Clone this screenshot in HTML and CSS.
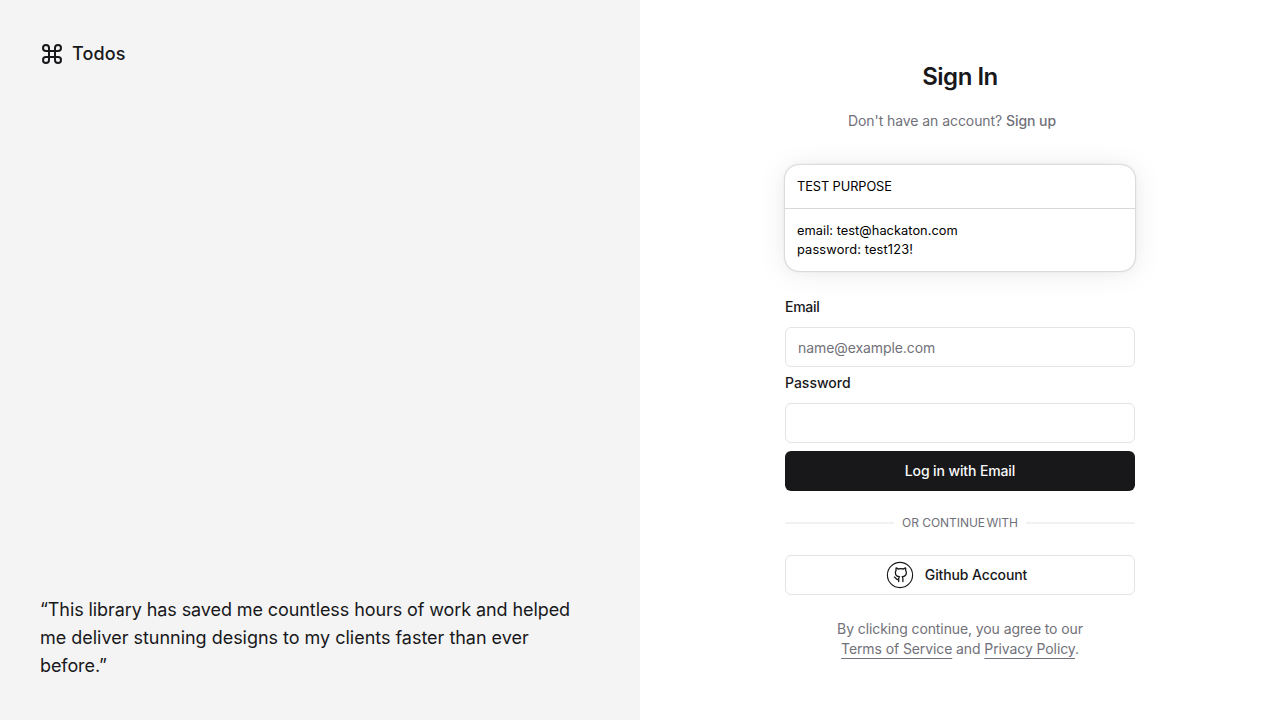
FILE: index.html
```html
<!DOCTYPE html>
<html lang="en">
<head>
<meta charset="utf-8">
<title>Sign In</title>
<link rel="stylesheet" href="styles.css">
</head>
<body>
<div class="page">
  <aside class="aside">
    <div class="brand">
      <svg class="brand-icon" viewBox="0 0 24 24" fill="none" stroke="currentColor" stroke-width="2" stroke-linecap="round" stroke-linejoin="round"><path d="M15 6v12a3 3 0 1 0 3-3H6a3 3 0 1 0 3 3V6a3 3 0 1 0-3 3h12a3 3 0 1 0-3-3"/></svg>
      Todos
    </div>
    <blockquote class="quote"><span class="quote-lead">“This library has saved me countless hours of work and helped</span> me deliver stunning designs to my clients faster than ever <span class="quote-lead">before.”</span></blockquote>
  </aside>
  <main class="main">
    <div class="column">
      <h1 class="title">Sign In</h1>
      <p class="subtitle">Don't have an account? <a class="signup">Sign up</a></p>
      <section class="card">
        <div class="card-header">TEST PURPOSE</div>
        <div class="card-body"><p class="email-line">email: test@hackaton.com</p><p class="password-line">password: test123!</p></div>
      </section>
      <form class="form">
        <label class="label label-email" for="email">Email</label>
        <input class="input" id="email" type="email" placeholder="name@example.com">
        <label class="label" for="password">Password</label>
        <input class="input" id="password" type="password">
        <button class="button primary" type="button">Log in with Email</button>
      </form>
      <div class="divider"><span class="divider-text">Or continue <span class="divider-last">with</span></span></div>
      <button class="button outline" type="button">
        <svg class="github-icon" viewBox="0 0 28 28" fill="none" stroke="currentColor" stroke-linecap="round" stroke-linejoin="round"><circle cx="14" cy="14" r="12.6" stroke-width="1.1"/><path stroke-width="1.3" d="M16.900 20.500v-2.800a3.200 3.200 0 0 0-.7-2.100c2.100 0 4.100-1.300 4.100-3.800.1-.9-.2-1.700-.7-2.400.2-.8.2-1.600 0-2.400 0 0-.7 0-2.100 1a12 12 0 0 0-5.300 0C10.800 7 10.100 7 10.100 7c-.2.800-.2 1.600 0 2.400a3.700 3.700 0 0 0-.7 2.400c0 2.500 2 3.800 4.100 3.800-.5.600-.8 1.300-.8 2.100v2.800M12.700 18.300c-3 1.200-2.800-2.200-4.400-2.200"/></svg>
        Github Account
      </button>
      <p class="terms">By clicking continue, you agree to our <a class="link">Terms of Service</a> and <a class="link">Privacy Policy</a>.</p>
    </div>
  </main>
</div>
</body>
</html>
```

FILE: styles.css
```css
* { box-sizing: border-box; margin: 0; }
body { font-family: Inter, "Liberation Sans", sans-serif; color: #18181b; background: #fff; }
.page { display: grid; grid-template-columns: 1fr 1fr; height: 720px; }
.aside { display: flex; flex-direction: column; justify-content: space-between; padding: 40px; background: #f4f4f4; }
.brand { display: flex; align-items: center; gap: 8px; font-size: 18px; line-height: 28px; font-weight: 500; letter-spacing: 0.15px; }
.brand-icon { width: 24px; height: 24px; }
.quote { font-size: 18px; line-height: 28px; letter-spacing: -0.02px; }
.quote-lead { letter-spacing: -0.09px; }
.main { display: flex; justify-content: center; padding-top: 61px; }
.column { width: 350px; }
.title { font-size: 24px; line-height: 32px; font-weight: 600; letter-spacing: -0.47px; text-align: center; }
.subtitle { margin-top: 18px; padding-right: 16px; font-size: 14px; line-height: 20px; letter-spacing: -0.07px; color: #71717a; text-align: center; }
.signup { font-weight: 500; }
.card { height: 106px; margin-top: 34px; border-radius: 14px; background: #fff; color: #000; font-size: 12.8px; line-height: 19.2px; box-shadow: 0 0 15px rgba(0,0,0,.03), 0 2px 30px rgba(0,0,0,.08), 0 0 2px rgba(0,0,0,.38); }
.card-header { padding: 12px; border-bottom: 1px solid #d8d8d8; letter-spacing: -0.08px; }
.card-body { padding: 12px; }
.email-line { letter-spacing: 0.05px; }
.password-line { letter-spacing: 0.15px; }
.form { display: flex; flex-direction: column; margin-top: 29px; }
.label { height: 14px; margin-bottom: 13px; font-size: 14px; line-height: 14px; font-weight: 500; }
.label-email { letter-spacing: -0.3px; }
.input { height: 40px; padding: 8px 12px; border: 1px solid #e4e4e7; border-radius: 6px; background: #fff; font: inherit; font-size: 14px; letter-spacing: -0.08px; margin-bottom: 9px; outline: none; }
.input::placeholder { color: #71717a; }
.button { display: flex; align-items: center; justify-content: center; width: 100%; height: 40px; border: 0; border-radius: 6px; font: 500 14px/20px Inter, "Liberation Sans", sans-serif; letter-spacing: -0.12px; }
.primary { margin-top: -1px; background: #18181b; color: #fafafa; }
.outline { gap: 11px; border: 1px solid #e4e4e7; background: #fff; color: #18181b; padding-right: 13px; }
.github-icon { width: 28px; height: 28px; }
.divider { display: flex; align-items: center; gap: 8px; margin: 24px 0; }
.divider::before, .divider::after { content: ""; flex: 1; height: 2px; background: #f1f1f2; }
.divider-text { font-size: 12px; line-height: 16px; letter-spacing: -0.04px; color: #71717a; text-transform: uppercase; }
.divider-last { margin-left: -2px; }
.terms { margin-top: 24px; padding: 0 32px; font-size: 14px; line-height: 20px; letter-spacing: -0.1px; color: #71717a; text-align: center; }
.link { text-decoration: underline; text-underline-offset: 4px; }
```
